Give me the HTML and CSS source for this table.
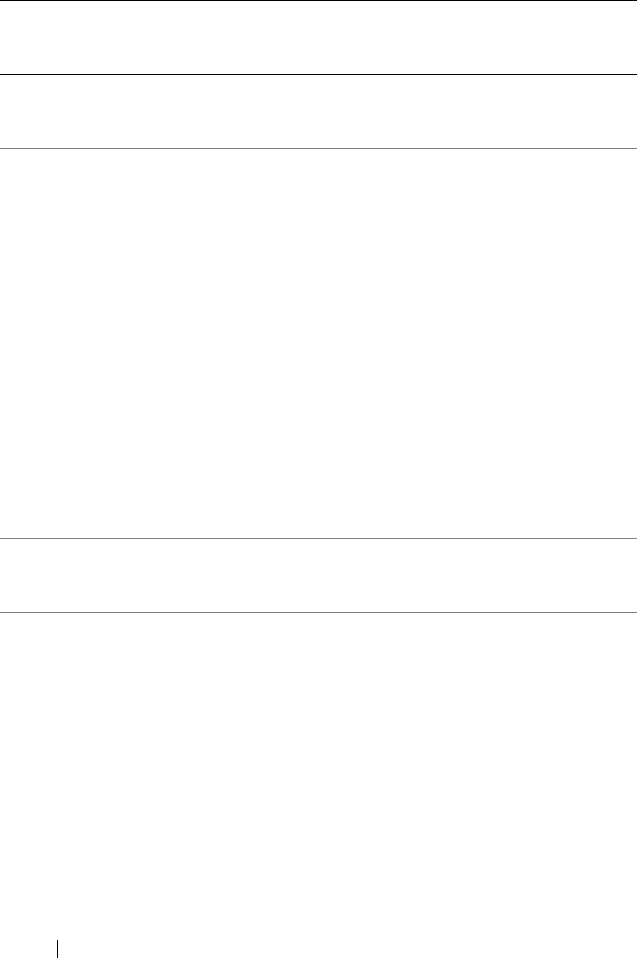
FILE: index.html
```html
<!DOCTYPE html>
<html lang="en">
<head>
  <meta charset="UTF-8">
  <meta name="viewport" content="width=device-width, initial-scale=1.0">
  <title>Page</title>
  <link rel="stylesheet" href="styles.css">
</head>
<body>
  <div class="page">
    <div class="table">
      <div class="row head"></div>
      <div class="row first"></div>
      <div class="row tall"></div>
      <div class="row"></div>
    </div>
    <div class="footer">
      <span class="bar"></span>
    </div>
  </div>
</body>
</html>
```

FILE: styles.css
```css
body {
  margin: 0;
  background: white;
  font-family: "Liberation Sans", Arial, sans-serif;
}
.page {
  width: 641px;
  height: 968px;
  display: flex;
  flex-direction: column;
  justify-content: space-between;
}
.table {
  width: 637px;
  border-top: 1.5px solid #000;
}
.row {
  height: 73px;
  border-bottom: 1px solid #808080;
}
.head {
  height: 72.5px;
  border-bottom: 1.5px solid #000;
}
.tall {
  height: 389px;
}
.footer {
  height: 28px;
  padding-left: 57px;
  display: flex;
}
.bar {
  width: 1px;
  height: 18px;
  background: #000;
}
```
